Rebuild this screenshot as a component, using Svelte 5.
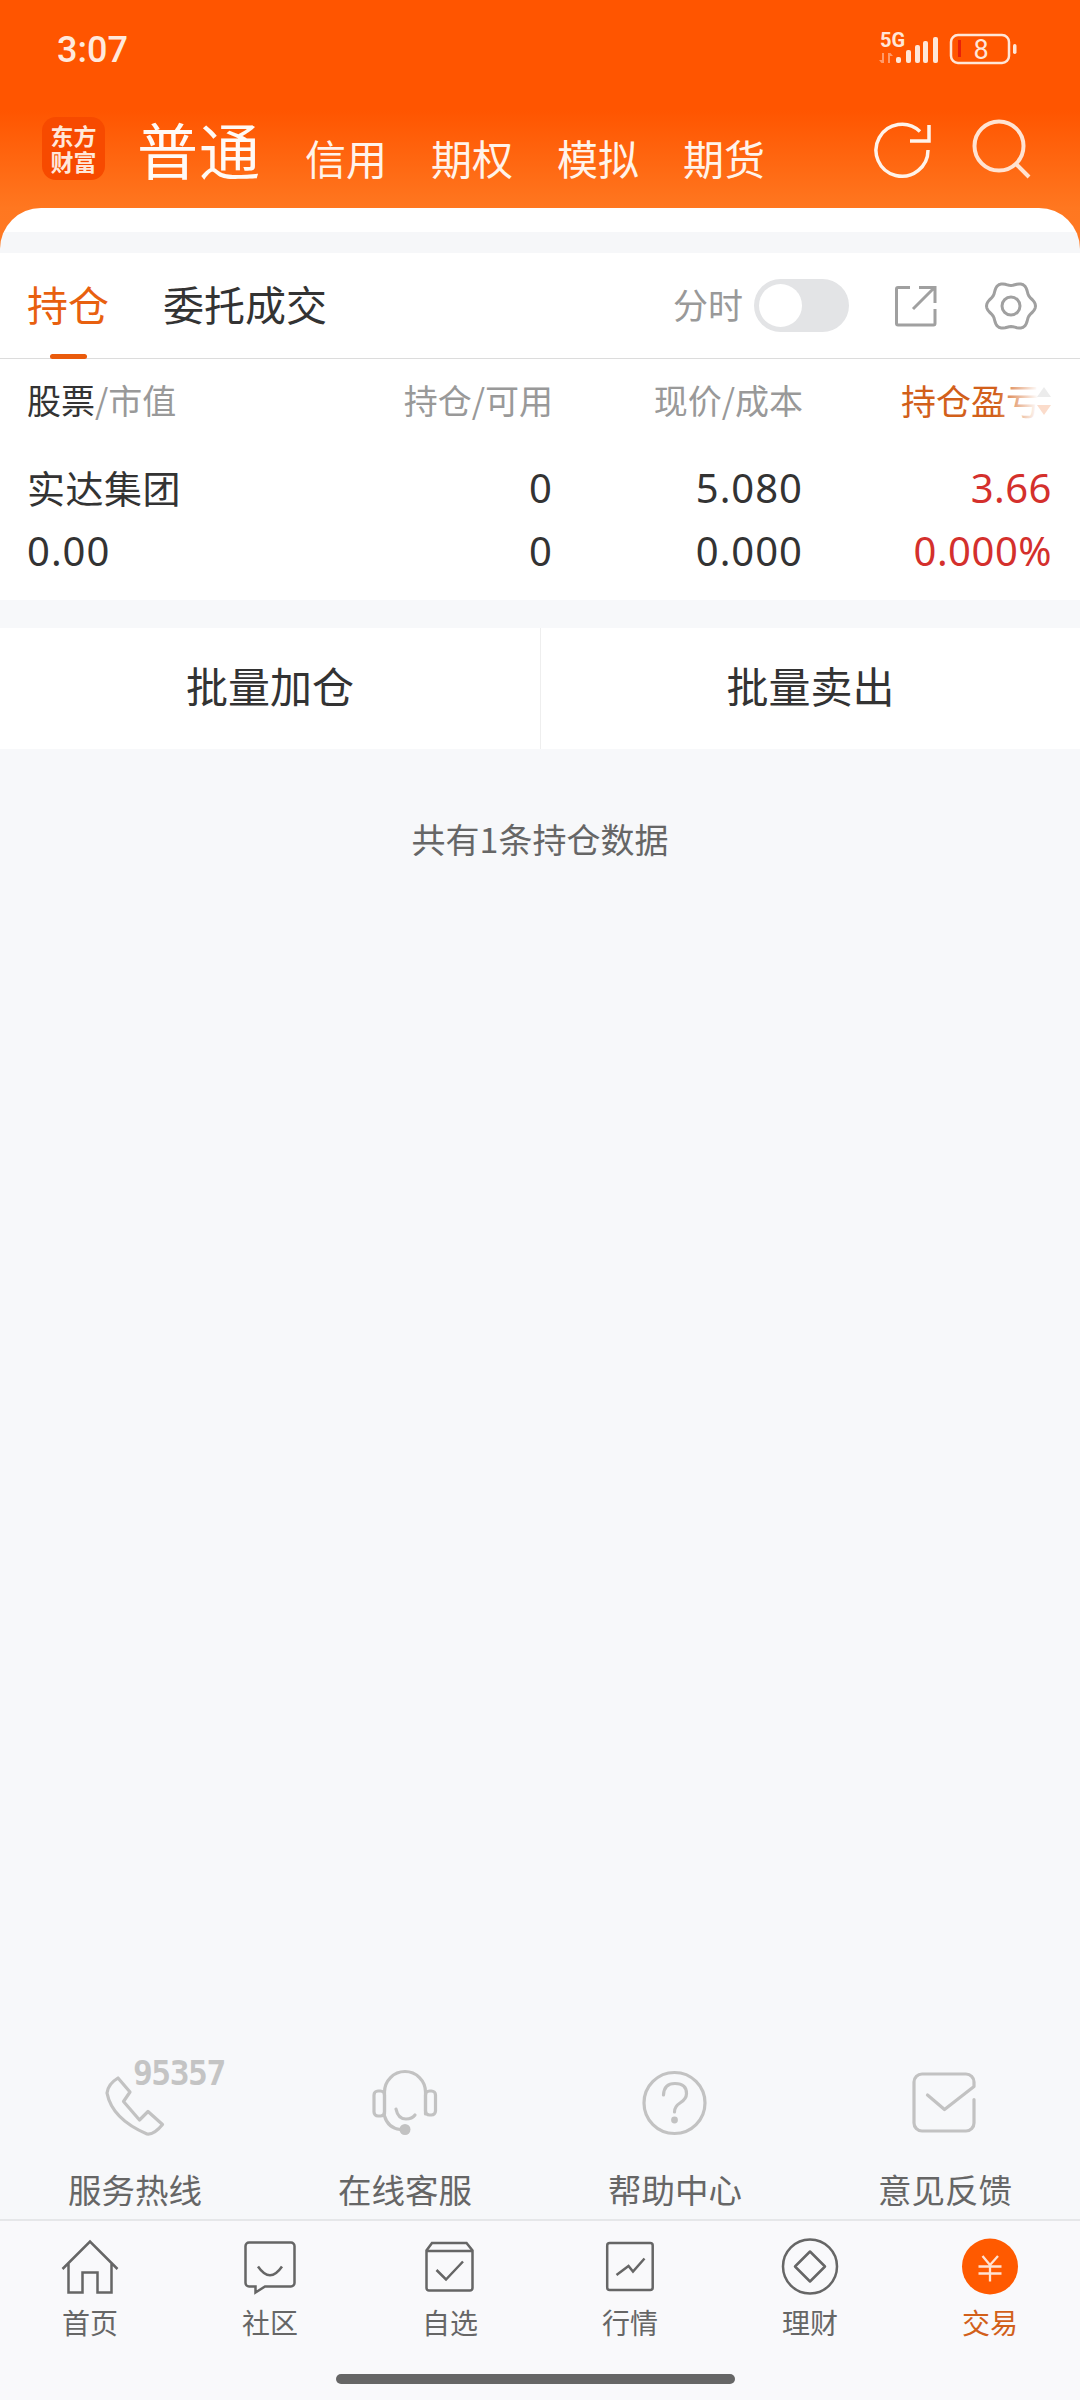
<script lang="ts">
const navItems = ['信用', '期权', '模拟', '期货'];
const helpers = ['服务热线', '在线客服', '帮助中心', '意见反馈'];
const tabs = ['首页', '社区', '自选', '行情', '理财', '交易'];

// six soft lobes round a circle
function gearPath() {
	let d = '';
	for (let a = 0; a < 360; a += 5) {
		const t = (a * Math.PI) / 180;
		const r = 22.5 + 2 * Math.cos(6 * t);
		d += `${a === 0 ? 'M' : 'L'}${(26 + r * Math.cos(t)).toFixed(2)} ${(26 + r * Math.sin(t)).toFixed(2)}`;
	}
	return d + 'Z';
}
const gear = gearPath();
</script>

<div class="page">
	<header class="head">
		<div class="status">
			<span class="time">3:07</span>
			<svg class="status-icons" width="150" height="40" viewBox="0 0 150 40">
				<path d="M8 24v10h-2.500l-2.500-3h3v-7ZM12 34V24h2.500l2.500 3h-3v7Z" fill="#ff9a6a" />
				<g fill="#ffe6d8">
					<rect x="20" y="28" width="5" height="6" rx="2" />
					<rect x="30" y="21" width="5" height="13" rx="2" />
					<rect x="39" y="16" width="5" height="18" rx="2" />
					<rect x="47" y="12" width="5" height="22" rx="2" />
					<rect x="57" y="8" width="5" height="26" rx="2" />
				</g>
				<rect x="75" y="6" width="58" height="28" rx="7" fill="none" stroke="#ffe6d8" stroke-width="2.500" />
				<rect x="82" y="11" width="3" height="17" fill="#e8200a" />
				<rect x="137" y="15" width="3.500" height="10" rx="1.700" fill="#ffe6d8" />
			</svg>
			<span class="net">5G</span>
			<span class="batt">8</span>
		</div>
		<nav class="nav">
			<div class="logo">东方<br />财富</div>
			<span class="nav-main">普通</span>
			{#each navItems as item}
				<span class="nav-item">{item}</span>
			{/each}
			<svg class="nav-refresh" width="64" height="64" viewBox="0 0 64 64">
				<path d="M58 34A26 26 0 1 1 50 15.500" fill="none" stroke="#fff3ea" stroke-width="3.500" />
				<path d="M40 25H59V9" fill="none" stroke="#fff3ea" stroke-width="3.500" />
			</svg>
			<svg class="nav-search" width="64" height="64" viewBox="0 0 64 64">
				<circle cx="27" cy="27" r="24.500" fill="none" stroke="#ffe3d2" stroke-width="4" />
				<path d="M44 45 57 58" fill="none" stroke="#ffe3d2" stroke-width="4" />
			</svg>
		</nav>
		<div class="panel"></div>
	</header>

	<section class="tabbar-top">
		<div class="tab active">持仓</div>
		<div class="tab">委托成交</div>
		<div class="tools">
			<span class="fen">分时</span>
			<div class="toggle"><div class="knob"></div></div>
			<svg class="share" width="42" height="42" viewBox="0 0 42 42">
				<path d="M15 2.500H3a1.500 1.500 0 0 0-1.500 1.500V38.500a1.500 1.500 0 0 0 1.500 1.500H38.500a1.500 1.500 0 0 0 1.500-1.500V24" fill="none" stroke="#a0a0a0" stroke-width="3" />
				<path d="M39 3 18 24M24 2.500H40V18" fill="none" stroke="#a0a0a0" stroke-width="3" />
			</svg>
			<svg class="gear" width="52" height="52" viewBox="0 0 52 52">
				<path d={gear} fill="none" stroke="#a0a0a0" stroke-width="3" stroke-linejoin="round" />
				<circle cx="26" cy="26" r="9" fill="none" stroke="#a0a0a0" stroke-width="3" />
			</svg>
		</div>
	</section>

	<section class="table">
		<div class="row head-row">
			<div><span class="dark">股票</span>/市值</div>
			<div class="r">持仓/可用</div>
			<div class="r">现价/成本</div>
			<div class="r sort">
				<span class="sort-label">持仓盈亏</span>
				<span class="fade"></span>
				<span class="up"></span>
				<span class="down"></span>
			</div>
		</div>
		<div class="row data first">
			<div class="name">实达集团</div>
			<div class="r">0</div>
			<div class="r">5.080</div>
			<div class="r red">3.66</div>
		</div>
		<div class="row data second">
			<div>0.00</div>
			<div class="r">0</div>
			<div class="r">0.000</div>
			<div class="r red">0.000%</div>
		</div>
	</section>

	<section class="batch">
		<div class="batch-btn">批量加仓</div>
		<div class="batch-btn">批量卖出</div>
	</section>

	<p class="count">共有1条持仓数据</p>

	<div class="spacer"></div>

	<section class="helpers">
		{#each helpers as label, i}
			<div class="helper">
				<div class="helper-icon">
					<svg width="70" height="70" viewBox="0 0 70 70" fill="none" stroke="#c2c2c2" stroke-width="3.200" stroke-linejoin="round" stroke-linecap="round">
						{#if i === 0}
							<path d="M18 11 30 25 23.500 34.500 39.500 53 48 44.500 62.500 57.500Q54 68 47 67 12 52 7 26 8 17 18 11Z" />
						{:else if i === 1}
							<path d="M14.500 47V25a20.500 20.500 0 0 1 41 0V47" />
							<rect x="4" y="24" width="10.500" height="25" rx="4" />
							<rect x="55.500" y="24" width="10" height="24" rx="4" />
							<path d="M14.500 49Q18 61 30 62.500" />
							<circle cx="35" cy="62.500" r="5.500" fill="#c2c2c2" stroke="none" />
							<path d="M26 42Q28 52 36 52 42 52 45 48" />
						{:else if i === 2}
							<circle cx="34.500" cy="36" r="30.500" />
							<path d="M23.500 28Q24 16.500 35 16.500 46.500 16.500 46.500 26.500 46.500 32 40 36 34.500 39.500 34.500 45" />
							<circle cx="34.500" cy="53" r="3.400" fill="#c2c2c2" stroke="none" />
						{:else}
							<path d="M64 32.500V56a8 8 0 0 1-8 8H12a8 8 0 0 1-8-8V15a8 8 0 0 1 8-8h44a8 8 0 0 1 8 8v4.500L34.500 42.500 17.500 28" />
						{/if}
					</svg>
					{#if i === 0}<span class="hotline">95357</span>{/if}
				</div>
				<div class="helper-label">{label}</div>
			</div>
		{/each}
	</section>

	<footer class="bottom">
		{#each tabs as label, i}
			<div class="bottom-tab" class:on={i === 5}>
				<svg width="60" height="60" viewBox="0 0 60 60" fill="none" stroke="#666" stroke-width="2.500">
					{#if i === 0}
						<path d="M2.500 33 30 5.500 57.500 33M8.500 27V56.500H22.500V36.500H37.500V56.500H51.500V27" />
					{:else if i === 1}
						<path d="M9 6.500H51a3.500 3.500 0 0 1 3.500 3.500V47a3.500 3.500 0 0 1-3.500 3.500H25L15.500 56.500V50.500H9a3.500 3.500 0 0 1-3.500-3.500V10A3.500 3.500 0 0 1 9 6.500Z" />
						<path d="M18 30.500Q30 48 42 30.500" />
					{:else if i === 2}
						<path d="M12 7H46.500L52.500 14.500V52a2.500 2.500 0 0 1-2.500 2.500H9A2.500 2.500 0 0 1 6.500 52V14.500Z" />
						<path d="M6.500 15H52.500M16.500 34 26 43.500 43 25.500" />
					{:else if i === 3}
						<rect x="7.200" y="7" width="45.500" height="47" rx="2.500" />
						<path d="M16.500 39 28.500 30 33 35.500 44.500 22.500" />
					{:else if i === 4}
						<circle cx="30" cy="30.500" r="27" />
						<path d="M30 15.500 45 30.500 30 45.500 15 30.500Z" stroke-linejoin="round" />
					{:else}
						<circle cx="30" cy="30.500" r="28" fill="#ff5a00" stroke="none" />
						<path d="M22.500 20 30 29 38 20M18.500 30.500H41.500M18.500 37.500H41.500M30 29V45.500" stroke="#ffe2d2" stroke-width="2.300" />
					{/if}
				</svg>
				<span>{label}</span>
			</div>
		{/each}
	</footer>

	<div class="home-wrap"><div class="home-bar"></div></div>
</div>

<style>
	:global(body) {
		margin: 0;
		background: #f7f8fa;
	}

	.page {
		width: 1080px;
		height: 2400px;
		display: flex;
		flex-direction: column;
		overflow: hidden;
		font-family: "Noto Sans CJK SC", "Noto Sans", sans-serif;
		background: #f7f8fa;
		color: #333;
	}

	.head {
		height: 253px;
		display: flex;
		flex-direction: column;
		background: linear-gradient(#ff5500 0, #ff5500 110px, #ff7720 208px, #ff7a24 253px);
	}

	.status {
		position: relative;
		height: 104px;
		flex: none;
	}

	.time {
		position: absolute;
		left: 57px;
		top: 27px;
		font: 500 36px/46px Roboto, sans-serif;
		color: #ffe9dc;
	}

	.status-icons {
		position: absolute;
		left: 876px;
		top: 29px;
	}

	.net {
		position: absolute;
		left: 880px;
		top: 28px;
		font: 700 20px/24px Roboto, sans-serif;
		color: #ffe6d8;
	}

	.batt {
		position: absolute;
		left: 951px;
		top: 35px;
		width: 60px;
		text-align: center;
		font: 400 27px/30px Roboto, sans-serif;
		color: #ffe6d8;
	}

	.nav {
		height: 104px;
		flex: none;
		display: flex;
		align-items: flex-start;
		padding-left: 42px;
		color: #fff;
	}

	.logo {
		width: 63px;
		height: 63px;
		margin-top: 13px;
		flex: none;
		border-radius: 14px;
		background: #f74a00;
		color: #ffe8da;
		font-size: 23px;
		font-weight: 700;
		line-height: 26px;
		text-align: center;
		padding-top: 5px;
		box-sizing: border-box;
	}

	.nav-main {
		margin-left: 32px;
		margin-top: 10px;
		font-size: 61px;
		line-height: 70px;
		letter-spacing: 1px;
		color: #fffaf6;
	}

	.nav-item {
		margin-left: 44px;
		margin-top: 28px;
		font-size: 41px;
		line-height: 50px;
		color: #fff3ea;
	}

	.nav-refresh {
		margin-left: auto;
		margin-right: 38px;
		margin-top: 12px;
	}

	.nav-search {
		margin-right: 44px;
		margin-top: 15px;
	}

	.panel {
		height: 45px;
		flex: none;
		border-radius: 41px 41px 0 0;
		background: linear-gradient(#fff 0, #fff 24px, #f6f7f9 24px);
	}

	.tabbar-top {
		height: 106px;
		flex: none;
		box-sizing: border-box;
		background: #fff;
		border-bottom: 1px solid #dcdcdc;
		display: flex;
		align-items: center;
		padding-left: 27px;
	}

	.tab {
		position: relative;
		font-size: 41px;
		line-height: 60px;
		margin-right: 54px;
		top: -3px;
		color: #333;
	}

	.tab.active {
		color: #e8600f;
	}

	.tab.active::after {
		content: "";
		position: absolute;
		left: 23px;
		bottom: -26px;
		width: 37px;
		height: 5px;
		border-radius: 3px;
		background: #ea5b0c;
	}

	.tools {
		margin-left: auto;
		display: flex;
		align-items: center;
		padding-right: 43px;
	}

	.fen {
		font-size: 35px;
		line-height: 50px;
		color: #999;
		margin-top: -3px;
	}

	.toggle {
		width: 95px;
		height: 53px;
		margin-left: 11px;
		border-radius: 27px;
		background: #e3e4e6;
		position: relative;
	}

	.knob {
		position: absolute;
		left: 5px;
		top: 5px;
		width: 43px;
		height: 43px;
		border-radius: 50%;
		background: #fff;
	}

	.share {
		margin-left: 46px;
	}

	.gear {
		margin-left: 48px;
	}

	.table {
		background: #fff;
		padding: 0 28px 0 27px;
		height: 241px;
		flex: none;
		box-sizing: border-box;
	}

	.row {
		display: grid;
		grid-template-columns: 276px 250px 250px 249px;
		align-items: center;
	}

	.r {
		text-align: right;
	}

	.head-row {
		height: 80px;
		font-size: 34px;
		color: #999;
	}

	.dark {
		color: #333;
	}

	.sort {
		position: relative;
		color: #d2601a;
		text-align: left;
		padding-left: 98px;
		white-space: nowrap;
	}

	.sort-label {
		font-size: 35px;
	}

	.fade {
		position: absolute;
		right: -4px;
		top: 0;
		bottom: 0;
		width: 60px;
		background: linear-gradient(90deg, rgba(255, 255, 255, 0), #fff 70%);
	}

	.up,
	.down {
		position: absolute;
		right: 1px;
		width: 0;
		height: 0;
		border-left: 7px solid transparent;
		border-right: 7px solid transparent;
	}

	.up {
		top: 13px;
		border-bottom: 10px solid #ececec;
	}

	.down {
		top: 31px;
		border-top: 10px solid #fbdccb;
	}

	.data {
		font: 400 40px/50px "Noto Sans", "Noto Sans CJK SC", sans-serif;
		letter-spacing: 1px;
		color: #333;
	}

	.first {
		height: 60px;
		margin-top: 19px;
	}

	.second {
		height: 68px;
		margin-top: -1px;
	}

	.name {
		font-size: 38px;
		letter-spacing: 0.500px;
	}

	.red {
		color: #d4302c;
		letter-spacing: 0.500px;
	}

	.batch {
		margin-top: 28px;
		height: 121px;
		flex: none;
		display: grid;
		grid-template-columns: 1fr 1fr;
		background: #fff;
	}

	.batch-btn {
		display: flex;
		align-items: center;
		justify-content: center;
		padding-bottom: 8px;
		font-size: 42px;
		color: #333;
	}

	.batch-btn + .batch-btn {
		border-left: 1px solid #eee;
	}

	.count {
		margin: 65px 0 0;
		text-align: center;
		font-size: 34px;
		line-height: 50px;
		color: #666;
	}

	.spacer {
		flex: 1;
	}

	.helpers {
		display: grid;
		grid-template-columns: repeat(4, 1fr);
		height: 154px;
		flex: none;
		box-sizing: border-box;
		border-bottom: 2px solid #e6e7e9;
	}

	.helper {
		display: flex;
		flex-direction: column;
		align-items: center;
	}

	.helper-icon {
		position: relative;
		height: 70px;
	}

	.hotline {
		position: absolute;
		left: 33px;
		top: -8px;
		font: 700 33px/30px "DejaVu Sans Mono", monospace;
		letter-spacing: -1.500px;
		color: #c4c4c4;
	}

	.helper-label {
		margin-top: 27px;
		font-size: 33.500px;
		line-height: 50px;
		color: #666;
	}

	.bottom {
		display: grid;
		grid-template-columns: repeat(6, 1fr);
		background: #f9f9fb;
		flex: none;
		height: 128px;
		padding-top: 15px;
		box-sizing: border-box;
	}

	.bottom-tab {
		display: flex;
		flex-direction: column;
		align-items: center;
		font-size: 28px;
		line-height: 40px;
		color: #666;
	}

	.bottom-tab.on {
		color: #d2601a;
	}

	.bottom-tab svg {
		margin-bottom: 6px;
	}

	.home-wrap {
		height: 51px;
		flex: none;
		background: #f9f9fb;
		display: flex;
		padding: 25px 0 0 336px;
		box-sizing: border-box;
	}

	.home-bar {
		width: 399px;
		height: 10px;
		border-radius: 5px;
		background: #666;
	}
</style>
